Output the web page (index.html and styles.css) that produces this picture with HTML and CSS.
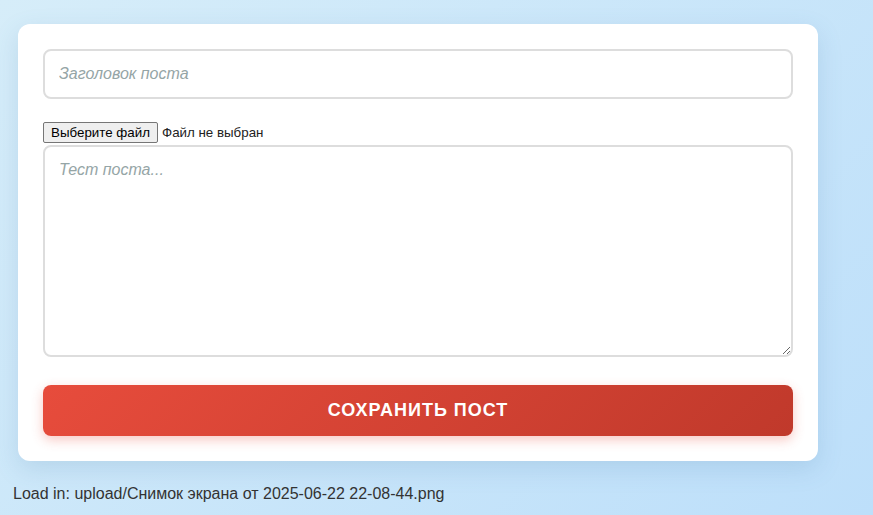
FILE: index.html
```html
<!DOCTYPE html>
<html lang="ru">
<head>
<meta charset="utf-8">
<title>Новый пост</title>
<link rel="stylesheet" href="styles.css">
</head>
<body>
<form class="card">
  <input class="field title" type="text" placeholder="Заголовок поста">
  <div class="file-row">
    <label class="file-btn">Выберите файл<input class="file-input" type="file"></label>
    <span class="file-name">Файл не выбран</span>
  </div>
  <textarea class="field body-text" placeholder="Тест поста..."></textarea>
  <button class="save" type="button">Сохранить пост</button>
</form>
<p class="status">Load in: upload/Снимок экрана от 2025-06-22 22-08-44.png</p>
</body>
</html>
```
FILE: styles.css
```css
html, body {
  margin: 0;
  height: 100%;
}
body {
  padding: 24px 13px 0;
  box-sizing: border-box;
  font-family: "Liberation Sans", Arial, sans-serif;
  background: linear-gradient(135deg, #d6edf9 0%, #bddffa 100%);
  color: #333;
}
.card {
  width: 800px;
  box-sizing: border-box;
  margin-left: 5px;
  padding: 25px;
  background: #fff;
  border-radius: 12px;
  box-shadow: 0 8px 24px rgba(80, 130, 170, 0.18);
  display: flex;
  flex-direction: column;
  align-items: stretch;
}
.field {
  width: 100%;
  box-sizing: border-box;
  border: 2px solid #dddddd;
  border-radius: 8px;
  padding: 14px;
  font-family: "Liberation Sans", Arial, sans-serif;
  font-size: 16px;
  line-height: 18px;
  color: #333;
  background: #fff;
  outline: none;
}
.field::placeholder {
  color: #95a5a6;
  font-style: italic;
}
.title {
  height: 50px;
  margin: 0 0 23px;
}
.file-row {
  display: flex;
  align-items: center;
  gap: 4px;
  height: 21px;
  margin: 0 0 2px;
  font-family: "Liberation Sans", Arial, sans-serif;
  font-size: 13.33px;
  color: #222;
}
.file-btn {
  box-sizing: border-box;
  height: 21px;
  width: 115px;
  display: flex;
  align-items: center;
  justify-content: center;
  border: 1px solid #767676;
  border-radius: 2px;
  background: #efefef;
  color: #000;
  cursor: default;
}
.file-input {
  display: none;
}
.body-text {
  height: 212px;
  resize: vertical;
  margin: 0 0 28px;
  display: block;
}
.save {
  width: 100%;
  height: 51px;
  border: none;
  border-radius: 8px;
  background: linear-gradient(135deg, #e74c3c 0%, #c0392b 100%);
  color: #fff;
  font-family: "Liberation Sans", Arial, sans-serif;
  font-size: 18px;
  font-weight: bold;
  text-transform: uppercase;
  letter-spacing: 1px;
  box-shadow: 0 4px 12px rgba(231, 76, 60, 0.3);
  cursor: pointer;
}
.status {
  margin: 24px 0 0;
  font-size: 16px;
  line-height: 18px;
  color: #333;
}
```
